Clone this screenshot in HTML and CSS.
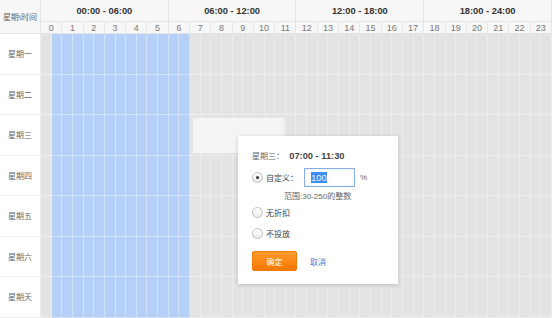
FILE: index.html
```html
<!DOCTYPE html>
<html lang="zh-CN">
<head>
    <meta charset="UTF-8">
    <meta name="viewport" content="width=device-width, initial-scale=1.0">
    <title>投放时段</title>
    <link rel="stylesheet" href="styles.css">
</head>
<body>

<div class="page">
    <div class="schedule">
        <div class="head">
            <div class="corner">星期\时间</div>
            <div class="group">00:00 - 06:00</div>
            <div class="group">06:00 - 12:00</div>
            <div class="group">12:00 - 18:00</div>
            <div class="group">18:00 - 24:00</div>
            <div class="hour">0</div><div class="hour">1</div><div class="hour">2</div><div class="hour">3</div>
            <div class="hour">4</div><div class="hour">5</div><div class="hour">6</div><div class="hour">7</div>
            <div class="hour">8</div><div class="hour">9</div><div class="hour">10</div><div class="hour">11</div>
            <div class="hour">12</div><div class="hour">13</div><div class="hour">14</div><div class="hour">15</div>
            <div class="hour">16</div><div class="hour">17</div><div class="hour">18</div><div class="hour">19</div>
            <div class="hour">20</div><div class="hour">21</div><div class="hour">22</div><div class="hour">23</div>
        </div>
        <div id="days"></div>
    </div>

    <div class="popup">
        <div class="popup-title">星期三： <b>07:00 - 11:30</b></div>
        <div class="option option-custom">
            <span class="radio checked"></span>
            <span class="label">自定义：</span>
            <span class="input"><span class="selected">100</span></span>
            <span class="unit">%</span>
        </div>
        <div class="hint">范围:30-250的整数</div>
        <div class="option">
            <span class="radio"></span>
            <span class="label">无折扣</span>
        </div>
        <div class="option option-last">
            <span class="radio"></span>
            <span class="label">不投放</span>
        </div>
        <div class="actions">
            <button class="btn-ok">确定</button>
            <a class="btn-cancel">取消</a>
        </div>
    </div>
</div>

<script>
    const days = ['星期一', '星期二', '星期三', '星期四', '星期五', '星期六', '星期天'];
    const wrap = document.getElementById('days');

    days.forEach((name, d) => {
        const row = document.createElement('div');
        row.className = 'day';
        let html = `<div class="day-name">${name}</div>`;
        for (let i = 0; i < 48; i++) {
            // 00:30 - 07:00 已选
            const on = i >= 1 && i <= 13;
            html += `<div class="cell${on ? ' on' : ''}"></div>`;
        }
        if (d === 2) html += '<div class="picking"></div>';
        row.innerHTML = html;
        wrap.appendChild(row);
    });
</script>
</body>
</html>
```

FILE: styles.css
```css
body { margin: 0; background: #fff; font-family: "Liberation Sans", "Noto Sans CJK SC", sans-serif; font-size: 8px; color: #666; }
.page { position: relative; width: 554px; height: 318px; overflow: hidden; }
.schedule { width: 552px; }

.head { display: grid; grid-template-columns: 41px repeat(24, 1fr); grid-template-rows: 22px 12px; background: #f7f7f7; }
.corner { grid-row: span 2; display: flex; align-items: center; justify-content: center; border-right: 1px solid #e6e6e6; border-bottom: 1px solid #e6e6e6; color: #666; }
.group { grid-column: span 6; display: flex; align-items: center; justify-content: center; font-size: 9.3px; font-weight: bold; color: #333; border-right: 1px solid #e6e6e6; border-bottom: 1px solid #e6e6e6; }
.hour { display: flex; align-items: center; justify-content: center; font-size: 9px; color: #777; border-right: 1px solid #e6e6e6; border-bottom: 1px solid #e3e3e3; }

.day { position: relative; display: grid; grid-template-columns: 41px repeat(48, 1fr); height: 40.5px; }
.day-name { display: flex; align-items: center; justify-content: center; background: #fff; border-bottom: 1px solid #eee; border-right: 1px solid #eee; color: #666; }
.cell { background: #e3e3e3; border-right: 1px solid #ececec; border-bottom: 1px solid #ededed; }
.cell.on { background: #b4cff8; border-right-color: #d3e2f9; border-bottom-color: #d6e3f6; }
.picking { position: absolute; left: 192px; top: 2px; width: 93px; height: 37px; box-sizing: border-box; background: #f4f4f4; border: 1px solid #e6e6e6; }

.popup { position: absolute; left: 238px; top: 136px; width: 160px; height: 148px; box-sizing: border-box; padding: 14px 0 0 14px; background: #fff; box-shadow: 0 1px 4px rgba(0,0,0,0.18); }
.popup-title { height: 12px; line-height: 12px; color: #666; }
.popup-title b { font-size: 9.3px; color: #444; margin-left: 3px; }

.option { display: flex; align-items: center; height: 14px; margin-top: 2px; color: #444; }
.option-custom { height: 19px; margin-top: 6px; }
.option-last { margin-top: 7px; }
.radio { width: 11px; height: 11px; box-sizing: border-box; border: 1px solid #bdbdbd; border-radius: 50%; background: linear-gradient(#fff, #ececec); margin-right: 3px; display: flex; align-items: center; justify-content: center; }
.radio.checked::after { content: ""; width: 3px; height: 3px; border-radius: 50%; background: #333; }
.input { width: 51px; height: 19px; box-sizing: border-box; margin-left: 6px; border: 1px solid #8aaee0; box-shadow: inset 0 0 2px rgba(90,140,220,0.35); display: flex; align-items: center; padding-left: 6px; font-size: 9.5px; }
.input .selected { background: #3d8ef0; color: #e8f0ff; line-height: 11px; }
.unit { margin-left: 5px; color: #666; }

.hint { margin: 4px 0 0 32px; height: 12px; line-height: 12px; color: #666; }

.actions { display: flex; align-items: center; margin-top: 11px; }
.btn-ok { width: 45px; height: 20px; padding: 0; border: 1px solid #f17a06; border-radius: 2px; background: linear-gradient(#ff9a2e, #f57800); color: #fff; font-family: inherit; font-size: 8px; }
.btn-cancel { margin-left: 13px; color: #3b7be0; }
```
